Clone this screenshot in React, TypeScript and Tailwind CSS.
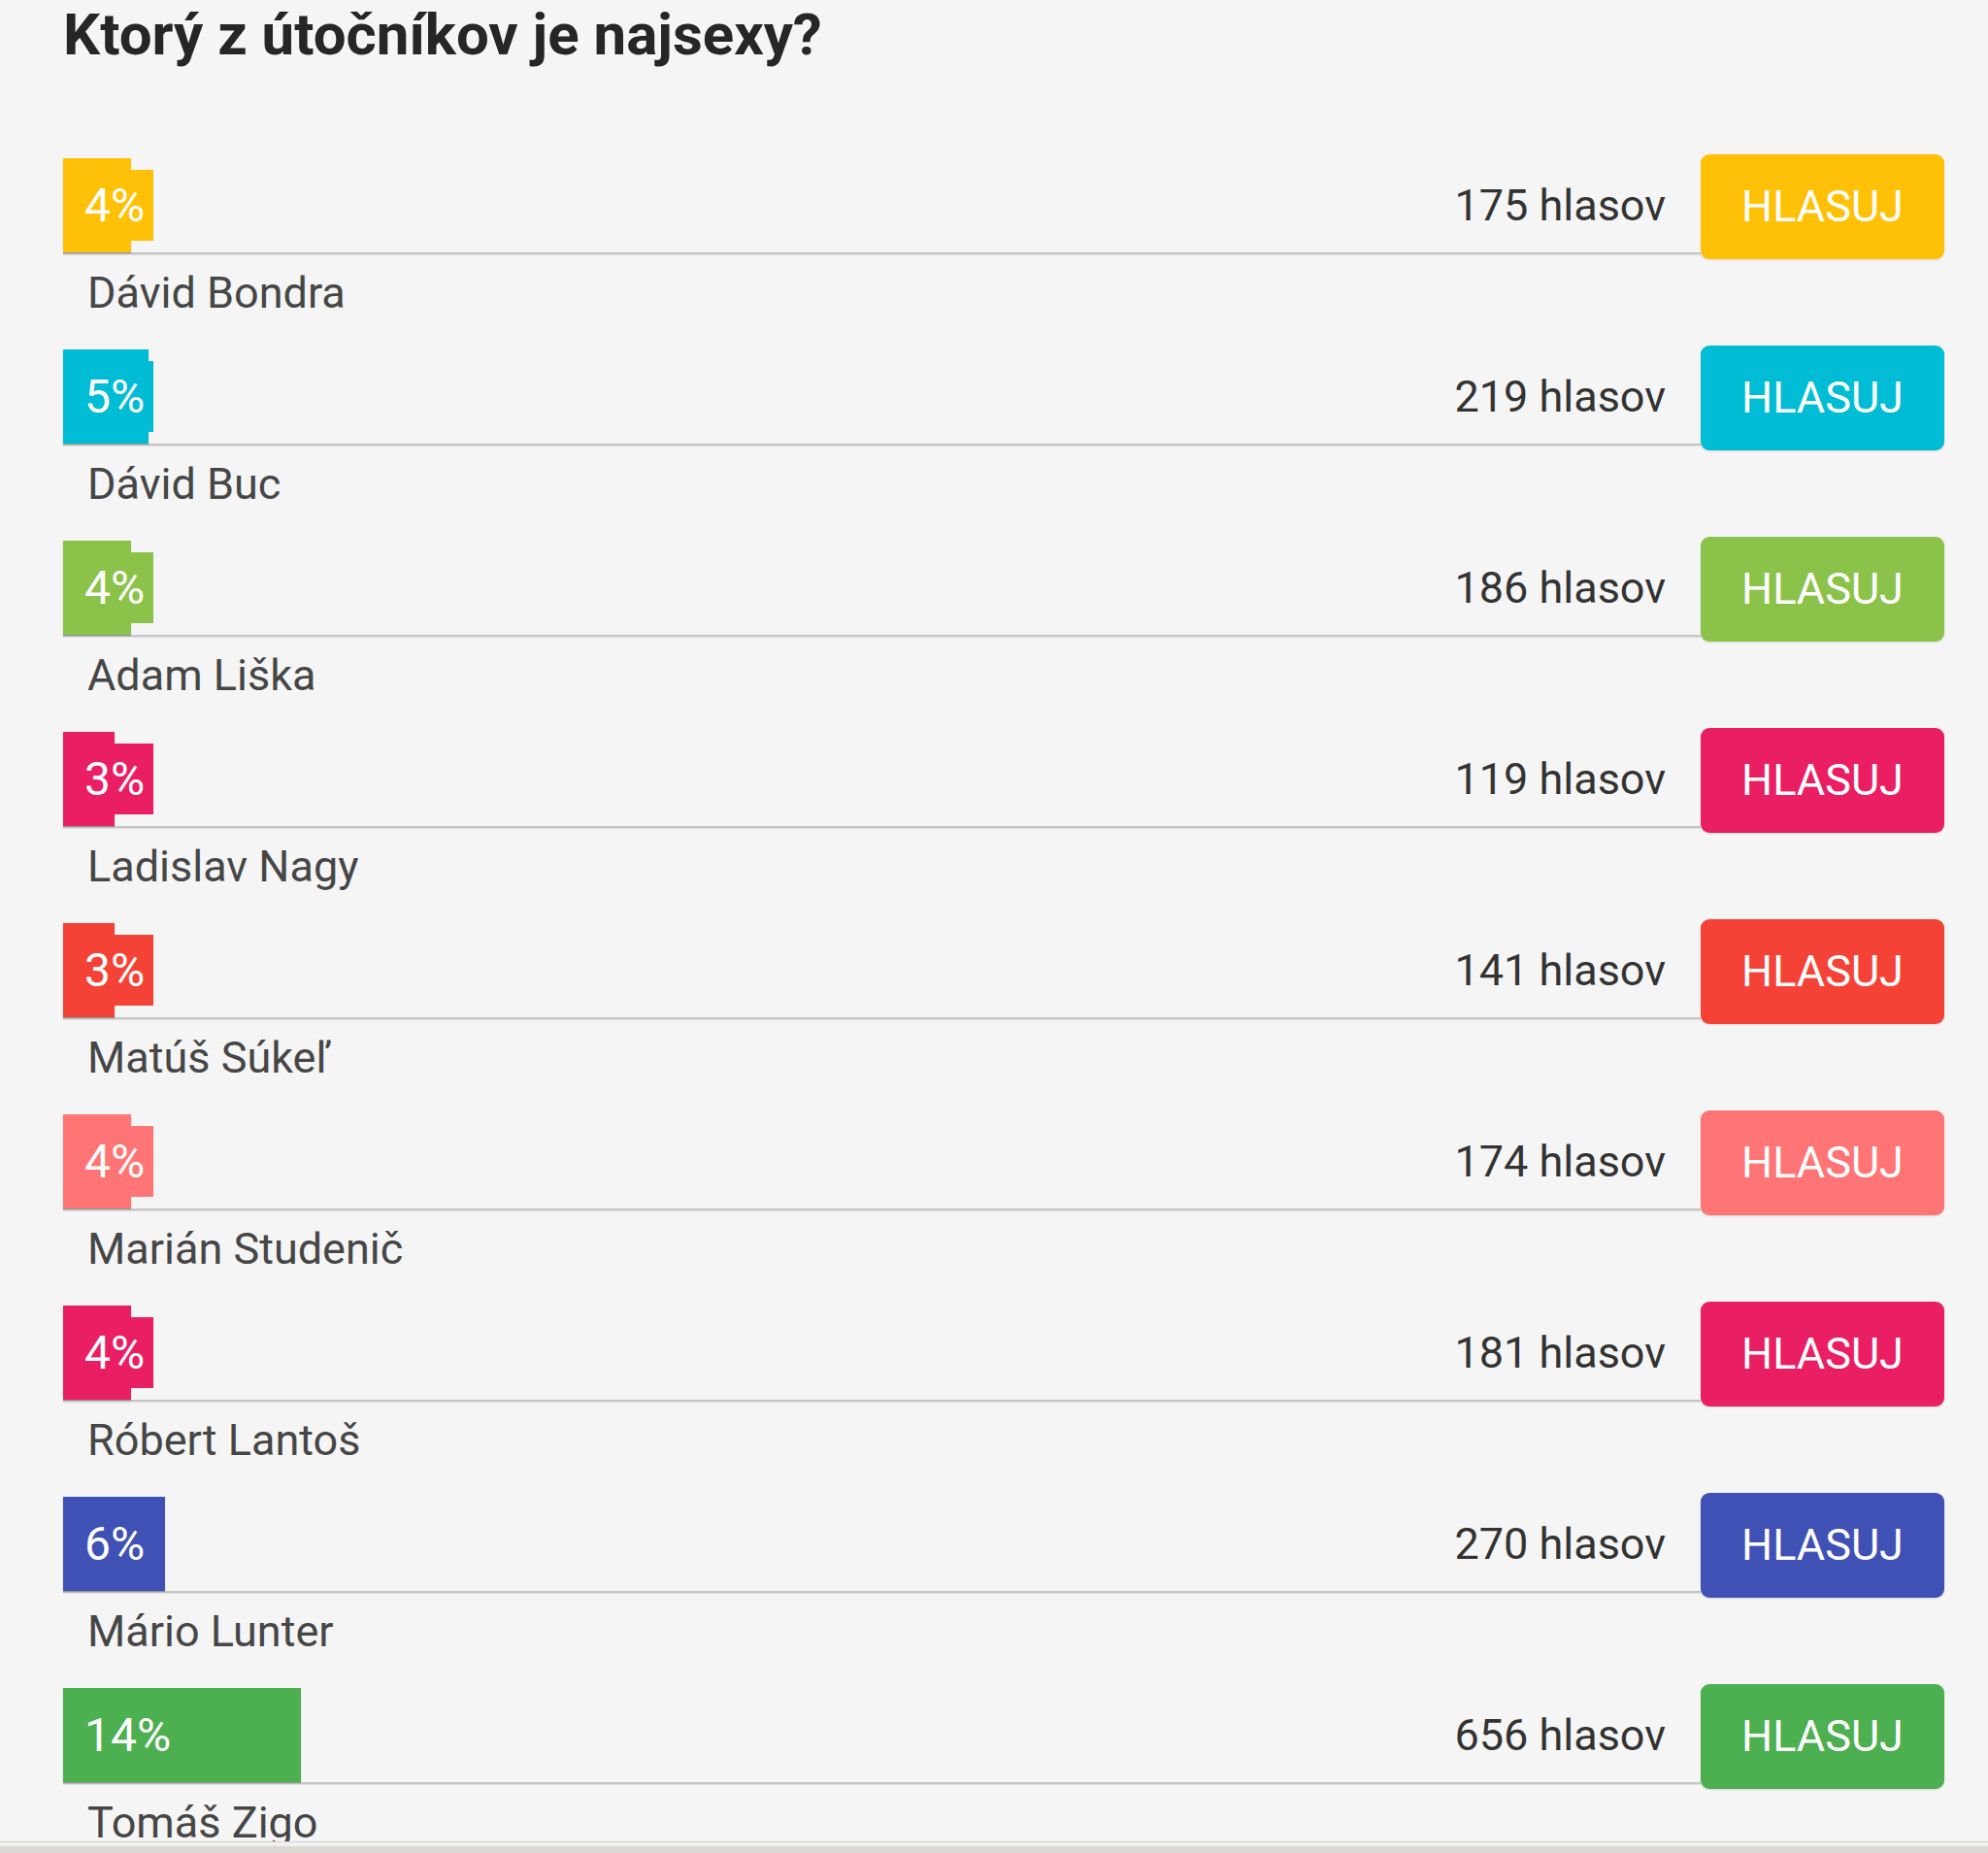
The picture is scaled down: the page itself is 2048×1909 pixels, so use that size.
import React from "react";

type Row = { pct: number; votes: number; name: string; color: string };

const rows: Row[] = [
  { pct: 4, votes: 175, name: "Dávid Bondra", color: "bg-[#ffc107]" },
  { pct: 5, votes: 219, name: "Dávid Buc", color: "bg-[#00bcd4]" },
  { pct: 4, votes: 186, name: "Adam Liška", color: "bg-[#8bc34a]" },
  { pct: 3, votes: 119, name: "Ladislav Nagy", color: "bg-[#e91e63]" },
  { pct: 3, votes: 141, name: "Matúš Súkeľ", color: "bg-[#f44336]" },
  { pct: 4, votes: 174, name: "Marián Studenič", color: "bg-[#ff7474]" },
  { pct: 4, votes: 181, name: "Róbert Lantoš", color: "bg-[#e91e63]" },
  { pct: 6, votes: 270, name: "Mário Lunter", color: "bg-[#3f51b5]" },
  { pct: 14, votes: 656, name: "Tomáš Zigo", color: "bg-[#4caf50]" },
];

function PollRow({ r }: { r: Row }) {
  return (
    <div className="flex flex-col">
      <div className="flex items-center h-[99px]">
        <div className="flex-1 h-full flex items-center border-b-2 border-[#c6c6c6] shadow-[0_1px_1px_rgba(0,0,0,0.08)]">
          <div
            className={`relative h-full ${r.color} shadow-[0_1px_1px_rgba(0,0,0,0.25)]`}
            style={{ width: `${r.pct * 17.5}px` }}
          >
            <span
              className={`absolute left-0 top-[12px] h-[73px] leading-[73px] pl-[22px] pr-[9px] ${r.color} text-white text-[48px] whitespace-nowrap`}
            >
              {r.pct}%
            </span>
          </div>
          <div className="flex-1" />
          <span className="mr-[36px] text-[45px] text-[#333333] leading-none whitespace-nowrap">
            {r.votes} hlasov
          </span>
        </div>
        <button
          className={`w-[251px] h-[108px] shrink-0 rounded-[9px] ${r.color} text-white text-[45px] leading-none shadow-[0_1px_2px_rgba(0,0,0,0.12)]`}
        >
          HLASUJ
        </button>
      </div>
      <div className="h-[98px] pt-[13px] pl-[25px] text-[45px] leading-[54px] text-[#464646] whitespace-nowrap">
        {r.name}
      </div>
    </div>
  );
}

export default function App() {
  return (
    <div className="w-[2048px] h-[1909px] bg-[#f5f5f5] font-['Roboto',sans-serif] overflow-hidden">
      <div className="h-[1897px] overflow-hidden pl-[65px] pr-[45px]">
        <h1 className="text-[60px] leading-[72px] font-bold text-[#262626] whitespace-nowrap">
          Ktorý z útočníkov je najsexy?
        </h1>
        <div className="mt-[91px] flex flex-col">
          {rows.map((r, i) => (
            <PollRow key={i} r={r} />
          ))}
        </div>
      </div>
      <div className="h-[12px] border-t border-[#d2d2d2] bg-[#f1f1f1] flex flex-col">
        <div className="mt-[4px] flex-1 bg-[#dcd8d4]" />
      </div>
    </div>
  );
}
